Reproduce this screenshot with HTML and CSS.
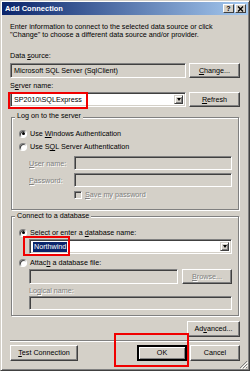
FILE: index.html
```html
<!DOCTYPE html>
<html lang="en">
  <head>
    <meta charset="UTF-8" />
    <meta name="viewport" content="width=device-width, initial-scale=1.0" />
    <title>Add Connection</title>
    <link rel="stylesheet" href="styles.css">
  </head>
  <body>
    <div class="window">
      <div class="titlebar">
        <span class="title">Add Connection</span>
        <span class="caption-btns">
          <span class="cap-btn">?</span>
          <span class="cap-btn">
            <svg width="7" height="6" viewBox="0 0 7 6"><path d="M1 0.5 L6 5.5 M6 0.5 L1 5.5" stroke="#000" stroke-width="1.3" /></svg>
          </span>
        </span>
      </div>

      <div class="content">
        <p class="intro">Enter information to connect to the selected data source or click<br>"Change" to choose a different data source and/or provider.</p>

        <div class="label lbl-source">Data <u>s</u>ource:</div>
        <div class="row">
          <div class="textbox readonly grow">Microsoft SQL Server (SqlClient)</div>
          <button class="btn btn-side"><u>C</u>hange...</button>
        </div>

        <div class="label lbl-server">S<u>e</u>rver name:</div>
        <div class="row">
          <div class="combo grow">
            <span class="combo-text">SP2010\SQLExpress</span>
            <span class="drop-btn"></span>
            <span class="mark mark-server"></span>
          </div>
          <button class="btn btn-side"><u>R</u>efresh</button>
        </div>

        <div class="group group-logon">
          <div class="legend">Log on to the server</div>
          <div class="option opt-first"><span class="radio checked"></span><span>Use <u>W</u>indows Authentication</span></div>
          <div class="option opt-second"><span class="radio"></span><span>Use S<u>Q</u>L Server Authentication</span></div>
          <div class="field field-user">
            <span class="field-label disabled"><u>U</u>ser name:</span>
            <div class="textbox readonly grow"></div>
          </div>
          <div class="field field-pass">
            <span class="field-label disabled"><u>P</u>assword:</span>
            <div class="textbox readonly grow"></div>
          </div>
          <div class="option opt-save disabled"><span class="checkbox"></span><span><u>S</u>ave my password</span></div>
        </div>

        <div class="group group-db">
          <div class="legend">Connect to a database</div>
          <div class="option opt-select"><span class="radio checked"></span><span>Select or enter a <u>d</u>atabase name:</span></div>
          <div class="combo combo-db">
            <span class="combo-text"><span class="selected">Northwind</span></span>
            <span class="drop-btn"></span>
            <span class="mark mark-db"></span>
          </div>
          <div class="option opt-attach"><span class="radio"></span><span>Attac<u>h</u> a database file:</span></div>
          <div class="row row-file">
            <div class="textbox readonly grow"></div>
            <button class="btn btn-browse disabled"><u>B</u>rowse...</button>
          </div>
          <div class="label lbl-logical disabled">Lo<u>g</u>ical name:</div>
          <div class="textbox readonly logical"></div>
        </div>

        <div class="advanced-row">
          <button class="btn btn-advanced">Ad<u>v</u>anced...</button>
        </div>

        <div class="separator"></div>

        <div class="footer">
          <button class="btn btn-test"><u>T</u>est Connection</button>
          <span class="spacer"></span>
          <button class="btn btn-ok default">OK</button>
          <button class="btn btn-cancel">Cancel</button>
          <span class="mark mark-ok"></span>
        </div>
      </div>

      <svg class="grip" width="9" height="9" viewBox="0 0 9 9">
        <path d="M8 1 L1 8 M8 4 L4 8 M8 7 L7 8" stroke="#808080" stroke-width="1" />
        <path d="M9 2 L2 9 M9 5 L5 9" stroke="#fff" stroke-width="1" />
      </svg>
    </div>
  </body>
</html>
```

FILE: styles.css
```css
:root {
  --face: #d4d0c8;
  --shadow: #808080;
  --dark: #404040;
  --light: #ffffff;
  --mark: #f00000;
}

* {
  box-sizing: border-box;
}

body {
  margin: 0;
  font-family: "Liberation Sans", Arial, sans-serif;
  font-size: 7.2px;
  color: #000;
  background: var(--face);
}

u {
  text-decoration-thickness: 1px;
  text-underline-offset: 1px;
}

.window {
  position: relative;
  width: 250px;
  height: 371px;
  padding: 2px;
  background: var(--face);
  border: 1px solid;
  border-color: var(--face) var(--dark) var(--dark) var(--face);
  box-shadow: inset 1px 1px 0 var(--light), inset -1px -1px 0 var(--shadow);
}

.titlebar {
  height: 13px;
  margin: -1px -1px 0;
  display: flex;
  align-items: center;
  justify-content: space-between;
  padding: 0 2px 0 3px;
  background: linear-gradient(to right, #0a246a, #a6caf0);
}

.title {
  color: #fff;
  font-weight: bold;
  font-size: 7.5px;
}

.caption-btns {
  display: flex;
  gap: 1px;
}

.cap-btn {
  width: 11px;
  height: 9px;
  display: flex;
  align-items: center;
  justify-content: center;
  background: var(--face);
  border: 1px solid;
  border-color: var(--light) var(--dark) var(--dark) var(--light);
  font-weight: bold;
  font-size: 7px;
  line-height: 7px;
}

.content {
  padding: 0 7px;
}

.intro {
  margin: 8px 0 0;
  line-height: 8px;
}

.label {
  line-height: 8px;
}

.lbl-source {
  margin-top: 13px;
}

.lbl-server {
  margin-top: 4px;
}

.row {
  display: flex;
  gap: 3px;
  height: 15px;
  margin-top: 3px;
}

.lbl-server + .row {
  margin-top: 2px;
}

.grow {
  flex: 1;
}

.textbox,
.combo {
  height: 15px;
  background: #fff;
  border: 1px solid;
  border-color: var(--shadow) var(--light) var(--light) var(--shadow);
  box-shadow: inset 1px 1px 0 var(--dark), inset -1px -1px 0 var(--face);
  padding: 0 3px;
  line-height: 13px;
  white-space: nowrap;
  overflow: hidden;
}

.textbox.readonly {
  background: var(--face);
}

.combo {
  position: relative;
  display: flex;
  align-items: center;
  padding: 2px;
  overflow: visible;
}

.combo-text {
  flex: 1;
  padding-left: 1px;
  line-height: 9px;
}

.drop-btn {
  width: 9px;
  height: 100%;
  background: var(--face);
  border: 1px solid;
  border-color: var(--face) var(--dark) var(--dark) var(--face);
  box-shadow: inset 1px 1px 0 var(--light), inset -1px -1px 0 var(--shadow);
  display: flex;
  align-items: center;
  justify-content: center;
}

.drop-btn::after {
  content: "";
  border-left: 2.5px solid transparent;
  border-right: 2.5px solid transparent;
  border-top: 3px solid #000;
}

.btn {
  font-family: inherit;
  font-size: 7.2px;
  color: #000;
  padding: 0;
  margin: 0;
  height: 15px;
  background: var(--face);
  border: 1px solid;
  border-color: var(--light) var(--dark) var(--dark) var(--light);
  box-shadow: inset -1px -1px 0 var(--shadow);
  line-height: 12px;
}

.btn-side {
  width: 51px;
}

.btn.default {
  outline: 1px solid #000;
  outline-offset: -1px;
  border-width: 2px;
  border-color: #000;
  box-shadow: inset 1px 1px 0 var(--light), inset -1px -1px 0 var(--shadow);
}

.disabled,
.btn.disabled {
  color: var(--shadow);
  text-shadow: 1px 1px 0 var(--light);
}

.mark {
  position: absolute;
  border: 2px solid var(--mark);
  pointer-events: none;
}

.mark-server {
  left: -3px;
  top: -1px;
  width: 80px;
  height: 17px;
}

.group {
  margin: 10px 1px 0;
  border: 1px solid var(--shadow);
  box-shadow: inset 1px 1px 0 var(--light), 1px 1px 0 var(--light);
  padding: 0 6px 10px 7px;
  display: flex;
  flex-direction: column;
}

.legend {
  align-self: flex-start;
  margin: -6px 0 0 -4px;
  padding: 0 2px;
  line-height: 8px;
  background: var(--face);
}

.option {
  display: flex;
  align-items: center;
  height: 9px;
  white-space: nowrap;
}

.radio,
.checkbox {
  flex: none;
  width: 8px;
  height: 8px;
  margin-right: 3px;
  background: #fff;
  border: 1px solid;
  border-color: var(--shadow) var(--light) var(--light) var(--shadow);
  box-shadow: inset 1px 1px 0 var(--dark);
  display: flex;
  align-items: center;
  justify-content: center;
}

.radio {
  border-radius: 50%;
}

.radio.checked::after {
  content: "";
  width: 3px;
  height: 3px;
  border-radius: 50%;
  background: #000;
}

.checkbox {
  background: var(--face);
}

.opt-first {
  margin-top: 9px;
}

.opt-second {
  margin-top: 4px;
}

.field {
  display: flex;
  align-items: center;
  margin-left: 10px;
  height: 14px;
}

.field .textbox {
  height: 14px;
}

.field-user {
  margin-top: 5px;
}

.field-pass {
  margin-top: 3px;
}

.field-label {
  width: 45px;
}

.opt-save {
  margin: 3px 0 0 55px;
}

.group-db {
  margin-top: 6px;
  padding-bottom: 5px;
}

.group-db .legend {
  margin-top: -5px;
}

.opt-select {
  margin-top: 8px;
}

.combo-db {
  margin: 2px 0 0 10px;
}

.selected {
  display: inline-block;
  background: #0a246a;
  color: #fff;
  padding: 0 1px;
  line-height: 10px;
}

.mark-db {
  left: -7px;
  top: -4px;
  width: 47px;
  height: 20px;
}

.opt-attach {
  margin-top: 4px;
}

.row-file {
  margin: 2px 0 0 10px;
}

.btn-browse {
  width: 50px;
  margin-left: 1px;
}

.lbl-logical {
  margin: 3px 0 0 10px;
}

.logical {
  height: 14px;
  margin: 1px 0 0 10px;
}

.advanced-row {
  display: flex;
  justify-content: flex-end;
  margin-top: 5px;
}

.btn-advanced {
  width: 53px;
  height: 16px;
}

.separator {
  height: 2px;
  margin-top: 3px;
  border-top: 1px solid var(--shadow);
  border-bottom: 1px solid var(--light);
}

.footer {
  position: relative;
  display: flex;
  gap: 3px;
  margin-top: 3px;
}

.footer .btn {
  height: 16px;
}

.btn-test {
  width: 68px;
}

.spacer {
  flex: 1;
}

.btn-ok,
.btn-cancel {
  width: 50px;
}

.mark-ok {
  left: 104px;
  top: -12px;
  width: 75px;
  height: 34px;
}

.grip {
  position: absolute;
  right: 1px;
  bottom: 1px;
}
```
